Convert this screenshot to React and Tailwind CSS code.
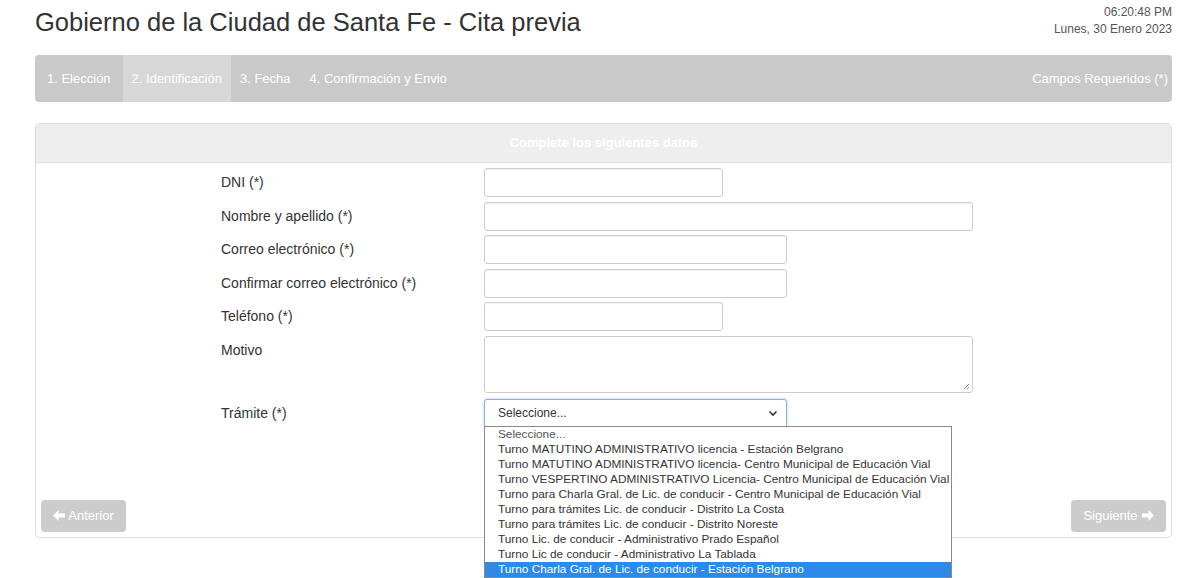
import React from "react";

const options = [
  "Seleccione...",
  "Turno MATUTINO ADMINISTRATIVO licencia - Estación Belgrano",
  "Turno MATUTINO ADMINISTRATIVO licencia- Centro Municipal de Educación Vial",
  "Turno VESPERTINO ADMINISTRATIVO Licencia- Centro Municipal de Educación Vial",
  "Turno para Charla Gral. de Lic. de conducir - Centro Municipal de Educación Vial",
  "Turno para trámites Lic. de conducir - Distrito La Costa",
  "Turno para trámites Lic. de conducir - Distrito Noreste",
  "Turno Lic. de conducir - Administrativo Prado Español",
  "Turno Lic de conducir - Administrativo La Tablada",
  "Turno Charla Gral. de Lic. de conducir - Estación Belgrano",
];

function ArrowLeft() {
  return (
    <svg width="12" height="11" viewBox="0 0 12 11" className="fill-white">
      <path d="M0 5.5 L5.5 0 L5.5 3.5 L12 3.5 L12 7.5 L5.5 7.5 L5.5 11 Z" />
    </svg>
  );
}

function ArrowRight() {
  return (
    <svg width="12" height="11" viewBox="0 0 12 11" className="fill-white">
      <path d="M12 5.5 L6.5 0 L6.5 3.5 L0 3.5 L0 7.5 L6.5 7.5 L6.5 11 Z" />
    </svg>
  );
}

function Row({ label, children, className = "" }) {
  return (
    <div className={"flex items-start " + className}>
      <label className="ml-[180px] w-[263px] pt-[6px] text-[14px] leading-[17px] text-[#333]">
        {label}
      </label>
      {children}
    </div>
  );
}

const inputCls =
  "h-[29px] rounded-[3px] border border-[#ccc] bg-white shadow-[inset_0_1px_1px_rgba(0,0,0,0.06)]";

function App() {
  return (
    <div className="h-screen overflow-hidden bg-white font-['Liberation_Sans',Arial,sans-serif]">
      <div className="ml-[35px] mr-[28px]">
        {/* header */}
        <div className="flex h-[55px] justify-between">
          <h1 className="pt-[7px] text-[25.5px] leading-[30px] text-[#333]">
            Gobierno de la Ciudad de Santa Fe - Cita previa
          </h1>
          <div className="pt-[4px] text-right text-[12px] leading-[17px] text-[#555]">
            <div>06:20:48 PM</div>
            <div>Lunes, 30 Enero 2023</div>
          </div>
        </div>

        {/* steps */}
        <div className="flex h-[47px] items-stretch rounded-[4px] bg-[#c9c9c9] text-[13px] text-white">
          <div className="flex items-center pl-[12px] pr-[12px]">1. Elección</div>
          <div className="flex items-center bg-[#d7d7d7] px-[9px]">2. Identificación</div>
          <div className="flex items-center pl-[9px] pr-[10px]">3. Fecha</div>
          <div className="flex items-center px-[9px]">4. Confirmación y Envio</div>
          <div className="ml-auto flex items-center pr-[4px]">Campos Requeridos (*)</div>
        </div>

        {/* panel */}
        <div className="mt-[21px] rounded-[4px] border border-[#ddd]">
          <div className="flex h-[39px] items-center justify-center border-b border-[#ddd] bg-[#eeeeee] text-[13px] font-bold text-white">
            Complete los siguientes datos
          </div>
          <div className="px-[5px] pb-[5px] pt-[5px]">
            <div className="flex flex-col gap-[4.6px]">
              <Row label="DNI (*)">
                <div className={inputCls + " w-[239px]"} />
              </Row>
              <Row label="Nombre y apellido (*)">
                <div className={inputCls + " w-[489px]"} />
              </Row>
              <Row label="Correo electrónico  (*)">
                <div className={inputCls + " w-[303px]"} />
              </Row>
              <Row label="Confirmar correo electrónico  (*)">
                <div className={inputCls + " w-[303px]"} />
              </Row>
              <Row label="Teléfono (*)">
                <div className={inputCls + " w-[239px]"} />
              </Row>
              <Row label="Motivo">
                <div className="relative h-[57px] w-[489px] rounded-[3px] border border-[#ccc] bg-white">
                  <svg width="7" height="7" viewBox="0 0 7 7" className="absolute bottom-[2px] right-[2px] stroke-[#888]">
                    <path d="M1 6 L6 1 M4 6 L6 4" strokeWidth="1" />
                  </svg>
                </div>
              </Row>
              <Row label="Trámite (*)" className="mt-[1.4px]">
                <div className="relative">
                  <div className="flex h-[29px] w-[303px] items-center justify-between rounded-[3px] border border-[#8fb0d6] bg-white pl-[13px] pr-[8px] shadow-[0_0_3px_rgba(100,150,220,0.5)] text-[12px] text-[#333]">
                    <span>Seleccione...</span>
                    <svg width="10" height="7" viewBox="0 0 10 7" className="fill-none stroke-[#333]">
                      <path d="M1.5 1.5 L5 5 L8.5 1.5" strokeWidth="1.6" />
                    </svg>
                  </div>
                  {/* open dropdown list */}
                  <div className="absolute left-0 top-[27px] z-10 w-[468px] border border-[#8a8a8a] bg-white text-[11.8px] leading-[15px] text-[#333]">
                    {options.map((o, i) => (
                      <div
                        key={o}
                        className={
                          "h-[15px] whitespace-nowrap px-[13px] " +
                          (i === options.length - 1
                            ? "bg-[#2e8ae6] text-white"
                            : i === 0
                            ? "text-[#555]"
                            : "")
                        }
                      >
                        {o}
                      </div>
                    ))}
                  </div>
                </div>
              </Row>
            </div>
            <div className="mt-[72px] flex justify-between">
              <button className="flex h-[32px] w-[85px] items-center justify-center gap-[3px] rounded-[4px] bg-[#cccccc] text-[13px] text-white">
                <ArrowLeft />
                Anterior
              </button>
              <button className="flex h-[32px] w-[95px] items-center justify-center gap-[4px] rounded-[4px] bg-[#cccccc] text-[13px] text-white">
                Siguiente
                <ArrowRight />
              </button>
            </div>
          </div>
        </div>
      </div>
    </div>
  );
}

export default App;
